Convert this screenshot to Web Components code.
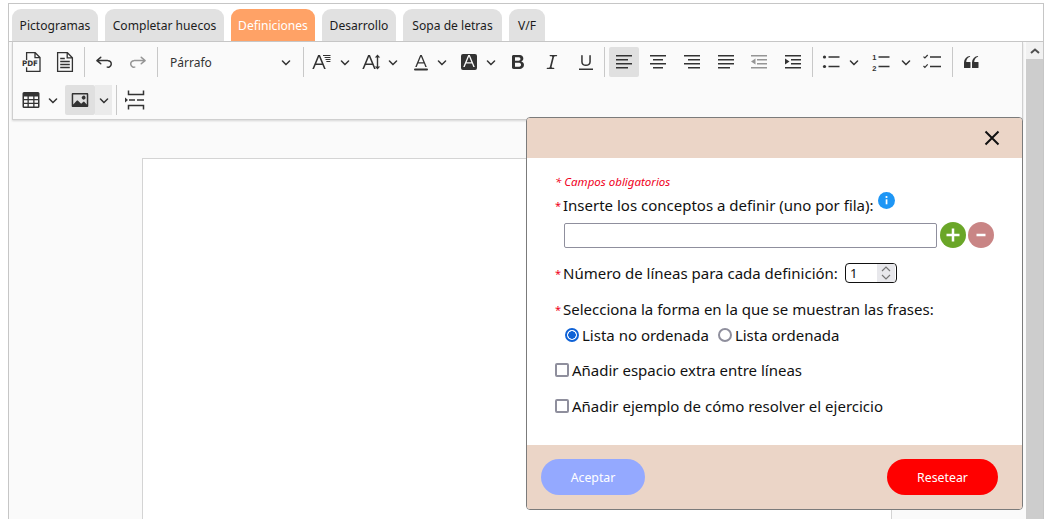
<!DOCTYPE html>
<html lang="es">
<head>
<meta charset="utf-8">
<title>Definiciones</title>
<style>
  html, body { margin: 0; height: 519px; overflow: hidden; background: #fff; }
  body { font-family: "Noto Sans", "Open Sans", sans-serif; }
</style>
</head>
<body>
<editor-shell>
  <tab-bar slot="tabs">
    <tab-item w="86">Pictogramas</tab-item>
    <tab-item w="119">Completar huecos</tab-item>
    <tab-item w="84" active>Definiciones</tab-item>
    <tab-item w="74">Desarrollo</tab-item>
    <tab-item w="99">Sopa de letras</tab-item>
    <tab-item w="36">V/F</tab-item>
  </tab-bar>

  <editor-toolbar slot="toolbar">
    <tool-button icon="pdf" ml="0"></tool-button>
    <tool-button icon="doc"></tool-button>
    <tool-sep></tool-sep>
    <tool-button icon="undo"></tool-button>
    <tool-button icon="redo" disabled></tool-button>
    <tool-sep></tool-sep>
    <tool-dropdown>Párrafo</tool-dropdown>
    <tool-sep ml="5"></tool-sep>
    <tool-button icon="fontsize" arrow="16" ml="3"></tool-button>
    <tool-button icon="lineheight" arrow="12"></tool-button>
    <tool-button icon="fontcolor" arrow="12" ml="7"></tool-button>
    <tool-button icon="bgcolor" arrow="14" ml="6"></tool-button>
    <tool-button icon="bold" ml="5"></tool-button>
    <tool-button icon="italic"></tool-button>
    <tool-button icon="underline"></tool-button>
    <tool-sep ml="3"></tool-sep>
    <tool-button icon="alignleft" active></tool-button>
    <tool-button icon="aligncenter"></tool-button>
    <tool-button icon="alignright"></tool-button>
    <tool-button icon="alignjustify"></tool-button>
    <tool-button icon="outdent" disabled ml="3"></tool-button>
    <tool-button icon="indent"></tool-button>
    <tool-sep></tool-sep>
    <tool-button icon="bullets" arrow="16" ml="3"></tool-button>
    <tool-button icon="numbers" arrow="20"></tool-button>
    <tool-button icon="todo" ml="1"></tool-button>
    <tool-sep ml="5"></tool-sep>
    <tool-button icon="quote" ml="3"></tool-button>
    <tool-break></tool-break>
    <tool-button icon="table" arrow="14" ml="0"></tool-button>
    <tool-button icon="image" arrow="17" active ml="5"></tool-button>
    <tool-sep></tool-sep>
    <tool-button icon="pagebreak" ml="3"></tool-button>
  </editor-toolbar>

  <form-dialog slot="dialog">
    <form-row h="18" top="14"><span style="font-size:11.5px;font-style:italic;color:#f0001c">* Campos obligatorios</span></form-row>
    <form-row h="20" top="5"><req-label>Inserte los conceptos a definir (uno por fila):</req-label><info-dot></info-dot></form-row>
    <form-row h="26" top="7" left="9"><text-box></text-box><round-button kind="plus"></round-button><round-button kind="minus"></round-button></form-row>
    <form-row h="20" top="15"><req-label>Número de líneas para cada definición:</req-label><number-box>1</number-box></form-row>
    <form-row h="20" top="16"><req-label>Selecciona la forma en la que se muestran las frases:</req-label></form-row>
    <form-row h="20" top="6" left="10"><radio-option checked>Lista no ordenada</radio-option><radio-option>Lista ordenada</radio-option></form-row>
    <form-row h="20" top="15"><check-option>Añadir espacio extra entre líneas</check-option></form-row>
    <form-row h="20" top="16"><check-option>Añadir ejemplo de cómo resolver el ejercicio</check-option></form-row>
    <pill-button slot="footer" color="#94a9ff" w="104">Aceptar</pill-button>
    <pill-button slot="footer" color="#ff0000" w="111">Resetear</pill-button>
  </form-dialog>
</editor-shell>

<script>
// paths for the toolbar icons, all on a 20x20 box
const ICONS = {
  pdf: `<path fill="none" stroke="#333" stroke-width="1.3" d="M5.6 8V.7h8.600l4.800 4.800V19.300H5.600v-4M14 .9v4.800h4.800"/>
        <rect x="0" y="8.200" width="17.500" height="6.800" fill="#fafafa"/>
        <text x="9" y="14.300" font-size="7.500" font-weight="700" text-anchor="middle" fill="#333" font-family="DejaVu Sans, sans-serif" textLength="16" lengthAdjust="spacingAndGlyphs">PDF</text>`,
  doc: `<path fill="none" stroke="#333" stroke-width="1.3" d="M2.6 19.300V.7h9.800l5 5v13.600zM12.200 .9v5h5"/>
        <path stroke="#333" stroke-width="1.3" d="M5.200 6.500h4.600M5.200 9.500h9.600M5.200 12.500h9.600M5.200 15.500h9.600"/>`,
  undo: `<path d="m5.042 9.367 2.189 1.837a.75.75 0 0 1-.965 1.149l-3.788-3.18a.747.747 0 0 1-.21-.284.75.75 0 0 1 .17-.945L6.23 4.762a.75.75 0 1 1 .964 1.15L4.863 7.866h8.917A.75.75 0 0 1 14 7.9a4 4 0 1 1-1.477 7.718l.344-1.489a2.5 2.5 0 1 0 1.094-4.73l.008-.032H5.042z"/>`,
  redo: `<path d="m14.958 9.367-2.189 1.837a.75.75 0 0 0 .965 1.149l3.788-3.18a.747.747 0 0 0 .21-.284.75.75 0 0 0-.17-.945L13.77 4.762a.75.75 0 1 0-.964 1.15l2.331 1.955H6.22A.75.75 0 0 0 6 7.9a4 4 0 1 0 1.477 7.718l-.344-1.489A2.5 2.5 0 1 1 6.039 9.4l-.008-.032h8.927z"/>`,
  fontsize: `<path d="M9.816 11.5 7.038 4.785 4.261 11.5h5.555Zm.62 1.5H3.641l-1.666 4.028H.312l5.789-14h1.875l5.789 14h-1.663L10.436 13Z"/>
        <path stroke="#333" stroke-width="1" d="M11 3.500h7.500M12.600 5.500h5.900M13.500 7.500h5M14.400 9.500h4"/>`,
  lineheight: `<path d="M9.816 11.5 7.038 4.785 4.261 11.5h5.555Zm.62 1.5H3.641l-1.666 4.028H.312l5.789-14h1.875l5.789 14h-1.663L10.436 13Z"/>
        <path d="M16.200 5.600v8.800h2l-2.700 3.200-2.700-3.200h2V5.600h-2l2.700-3.200 2.700 3.200z"/>`,
  fontcolor: `<path d="M12.4 10.3 10 4.5l-2.4 5.8h4.8zm.5 1.2H7.1L5.7 15H4.2l5-12h1.6l5 12h-1.5L13 11.5zm3.1 7H4a1 1 0 0 1 0-2h12a1 1 0 0 1 0 2z"/>`,
  bgcolor: `<path fill-rule="evenodd" d="M4 2h12a2 2 0 0 1 2 2v12a2 2 0 0 1-2 2H4a2 2 0 0 1-2-2V4a2 2 0 0 1 2-2zm8.4 8.3L10 4.5l-2.4 5.8h4.8zm.5 1.2H7.1L5.7 15H4.2l5-12h1.6l5 12h-1.5L13 11.5z"/>`,
  bold: `<path d="M10.187 17H5.773c-.637 0-1.092-.138-1.364-.415-.273-.277-.409-.718-.409-1.323V4.738c0-.617.14-1.062.419-1.332.279-.27.73-.406 1.354-.406h4.68c.69 0 1.288.041 1.793.124.506.083.96.242 1.36.478.341.197.644.447.906.75a3.262 3.262 0 0 1 .808 2.162c0 1.401-.722 2.426-2.167 3.075C15.05 10.175 16 11.315 16 13.01a3.756 3.756 0 0 1-2.296 3.504 6.1 6.1 0 0 1-1.517.377c-.571.073-1.238.11-2 .11zm-.217-6.217H7v4.087h3.069c1.977 0 2.965-.69 2.965-2.072 0-.707-.256-1.22-.768-1.537-.512-.319-1.277-.478-2.296-.478zM7 5.13v3.619h2.606c.729 0 1.292-.067 1.69-.2a1.6 1.6 0 0 0 .91-.765c.165-.267.247-.566.247-.897 0-.707-.26-1.176-.778-1.409-.519-.232-1.31-.348-2.375-.348H7z"/>`,
  italic: `<path d="m9.586 14.633.021.004c-.036.335.095.655.393.962.082.083.173.15.274.201h1.474a.6.6 0 1 1 0 1.2H5.304a.6.6 0 0 1 0-1.2h1.15c.474-.07.809-.182 1.005-.334.157-.122.291-.32.404-.597l2.416-9.55a1.053 1.053 0 0 0-.281-.823 1.12 1.12 0 0 0-.442-.296H8.15a.6.6 0 0 1 0-1.2h6.443a.6.6 0 1 1 0 1.2h-1.195c-.376.056-.65.155-.823.296-.215.175-.423.439-.623.79l-2.366 9.347z"/>`,
  underline: `<path d="M3 18v-1.5h14V18zm2.2-8V3.6c0-.4.4-.6.8-.6.3 0 .7.2.7.6v6.2c0 2 1.3 2.8 3.2 2.8 1.9 0 3.4-.9 3.4-2.9V3.6c0-.3.4-.5.8-.5.3 0 .7.2.7.5V10c0 2.7-2.2 4-4.9 4-2.6 0-4.7-1.2-4.7-4z"/>`,
  alignleft: lines([[2, 18], [2, 14], [2, 18], [2, 14]]),
  aligncenter: lines([[2, 18], [5, 15], [2, 18], [5, 15]]),
  alignright: lines([[2, 18], [6, 18], [2, 18], [6, 18]]),
  alignjustify: lines([[2, 18], [2, 18], [2, 18], [2, 14]]),
  outdent: `<path stroke="#333" stroke-width="1.5" d="M2 3.750h16M8 7.750h10M8 11.750h10M2 15.750h16"/><path d="M6.500 6.500v6L2 9.500z"/>`,
  indent: `<path stroke="#333" stroke-width="1.5" d="M2 3.750h16M8 7.750h10M8 11.750h10M2 15.750h16"/><path d="M2 6.500v6l4.500-3z"/>`,
  bullets: `<circle cx="3.500" cy="5" r="1.600"/><circle cx="3.500" cy="14.500" r="1.600"/><path stroke="#333" stroke-width="1.5" d="M7.500 5h11M7.500 14.500h11"/>`,
  numbers: `<path stroke="#333" stroke-width="1.5" d="M7.500 5h11M7.500 14.500h11"/>
        <text x="3.400" y="8" font-size="7.500" font-weight="700" text-anchor="middle" fill="#333" font-family="Liberation Sans, sans-serif">1</text>
        <text x="3.400" y="18.500" font-size="7.500" font-weight="700" text-anchor="middle" fill="#333" font-family="Liberation Sans, sans-serif">2</text>`,
  todo: `<path fill="none" stroke="#333" stroke-width="1.2" d="M1.500 4.600l1.400 1.400 2.800-3M1.500 14l1.400 1.400 2.800-3"/><path stroke="#333" stroke-width="1.5" d="M8 5h11M8 14.500h11"/>`,
  quote: `<path d="M3 10.423a6.5 6.5 0 0 1 6.056-6.408l.038.67C6.448 5.423 5.354 7.663 5.22 10H9c.552 0 .5.432.5.986v4.511c0 .554-.448.503-1 .503h-5c-.552 0-.5-.449-.5-1.003v-4.574zm8 0a6.5 6.5 0 0 1 6.056-6.408l.038.67c-2.646.739-3.74 2.979-3.873 5.315H17c.552 0 .5.432.5.986v4.511c0 .554-.448.503-1 .503h-5c-.552 0-.5-.449-.5-1.003v-4.574z"/>`,
  table: `<path fill-rule="evenodd" d="M3 2h14a1.5 1.5 0 0 1 1.5 1.500v13A1.5 1.5 0 0 1 17 18H3a1.500 1.500 0 0 1-1.500-1.500v-13A1.500 1.500 0 0 1 3 2zm0 4.500V9h3.500V6.500zm4.800 0V9h4.400V6.500zm5.700 0V9H17V6.500zM3 10.300v2.400h3.500v-2.400zm4.800 0v2.400h4.400v-2.400zm5.700 0v2.400H17v-2.400zM3 14v2.500h3.500V14zm4.800 0v2.500h4.400V14zm5.700 0v2.500H17V14z"/>`,
  image: `<path d="M6.91 10.54c.26-.23.64-.21.88.03l3.36 3.14 2.23-2.06a.64.64 0 0 1 .87 0l2.52 2.97V4.5H3.2v10.12l3.71-4.08zm10.27-7.51c.6 0 1.09.47 1.09 1.05v11.84c0 .59-.49 1.06-1.09 1.06H2.79c-.6 0-1.09-.47-1.09-1.06V4.08c0-.58.49-1.05 1.1-1.05h14.38zm-5.22 5.56a1.96 1.96 0 1 1 3.4-1.96 1.96 1.96 0 0 1-3.4 1.96z"/>`,
  pagebreak: `<path fill="none" stroke="#333" stroke-width="1.5" d="M3.500 .5v4h15v-4M3.500 19.500v-4h15v4"/>
        <path stroke="#333" stroke-width="1.500" d="M4 10h6M12 10h7"/><path d="M0 7.500v5l3-2.500z"/>`
};

function lines(rows) {
  const ys = [3.75, 7.75, 11.75, 15.75];
  return rows.map((r, i) => `<path stroke="#333" stroke-width="1.5" d="M${r[0]} ${ys[i]}H${r[1]}"/>`).join("");
}

const CHEVRON = `<svg viewBox="0 0 10 10" width="10" height="10" fill="#333"><path d="M.941 4.523a.75.75 0 1 1 1.06-1.06l3.006 3.005 3.005-3.005a.75.75 0 1 1 1.06 1.06l-3.549 3.55a.75.75 0 0 1-1.168-.136L.941 4.523z"/></svg>`;

// small helper so each element below stays short
class Base extends HTMLElement {
  render(html) {
    const shadow = this.attachShadow({mode: "open"});
    shadow.innerHTML = html;
  }
}

class EditorShell extends Base {
  constructor() {
    super();
    this.render(`<style>
      :host { display: block; position: relative; box-sizing: border-box; width: 1036px; height: 516px; margin: 3px 0 0 8px;
        border: 1px solid #c6c6c6; border-bottom: 0; padding-top: 5px; }
      .editor { display: flex; height: 478px; box-sizing: border-box; border-top: 1px solid #c6c6c6; background: #fafafa; overflow: hidden; }
      .main { flex: 1; min-width: 0; }
      .page { margin: 38px 0 0 133px; width: 750px; height: 500px; box-sizing: border-box; background: #fff; border: 1px solid #d4d4d4; }
      .bar { width: 17px; background: #f1f1f1; display: flex; flex-direction: column; align-items: center; }
      .up { height: 17px; display: flex; align-items: center; justify-content: center; }
      .thumb { flex: 1; width: 100%; background: #cdcdcd; }
    </style>
    <slot name="tabs"></slot>
    <div class="editor">
      <div class="main"><slot name="toolbar"></slot><div class="page"></div></div>
      <div class="bar">
        <div class="up"><svg width="10" height="6" viewBox="0 0 10 6"><path fill="none" stroke="#505050" stroke-width="2" d="M1 5l4-3.500L9 5"/></svg></div>
        <div class="thumb"></div>
      </div>
    </div>
    <slot name="dialog"></slot>`);
  }
}

class TabBar extends Base {
  constructor() {
    super();
    this.render(`<style>
      :host { display: flex; gap: 7px; padding-left: 3px; height: 32px; }
    </style><slot></slot>`);
  }
}

class TabItem extends Base {
  constructor() {
    super();
    this.render(`<style>
      :host { display: flex; align-items: center; justify-content: center; width: ${this.getAttribute("w")}px; height: 32px; border-radius: 9px 9px 0 0; background: #e1e1e1;
        color: #1c1c1c; font: 12.1px "Noto Sans", sans-serif; }
      :host([active]) { background: #ffa266; color: #fff; }
    </style><slot></slot>`);
  }
}

class EditorToolbar extends Base {
  constructor() {
    super();
    this.render(`<style>
      :host { display: flex; flex-wrap: wrap; align-content: flex-start; row-gap: 4px; box-sizing: border-box; height: 78px; margin: 0 3px; padding: 5px 3px 0;
        background: #fafafa; border: 1px solid #cfcfcf; border-top: 0; box-shadow: 0 1px 2px rgba(0,0,0,.15); }
    </style><slot></slot>`);
  }
}

class ToolButton extends Base {
  constructor() {
    super();
    const arrow = this.getAttribute("arrow");
    this.render(`<style>
      :host { display: flex; height: 30px; margin-left: ${this.getAttribute("ml") || 4}px; flex: none; }
      .ic { width: 30px; display: flex; align-items: center; justify-content: center; border-radius: 2px; }
      .ar { width: ${arrow || 0}px; display: flex; align-items: center; justify-content: center; }
      svg { display: block; overflow: visible; }
      :host([active]) .ic { background: #e0e0e0; }
      :host([active]) .ar { background: #ebebeb; }
      :host([disabled]) { opacity: .5; }
    </style>
    <div class="ic"><svg viewBox="0 0 20 20" width="20" height="20" fill="#333">${ICONS[this.getAttribute("icon")]}</svg></div>
    ${arrow ? `<div class="ar">${CHEVRON}</div>` : ""}`);
  }
}

class ToolDropdown extends Base {
  constructor() {
    super();
    this.render(`<style>
      :host { display: flex; align-items: center; justify-content: space-between; box-sizing: border-box; width: 136px; height: 30px; margin-left: 4px; padding: 0 7px 0 8px;
        font: 12px "Noto Sans", sans-serif; color: #333; flex: none; }
    </style><slot></slot>${CHEVRON}`);
  }
}

class ToolSep extends Base {
  constructor() {
    super();
    this.render(`<style>
      :host { display: block; width: 1px; height: 30px; background: #c8c8c8; margin-left: ${this.getAttribute("ml") || 4}px; flex: none; }
    </style>`);
  }
}

class ToolBreak extends Base {
  constructor() {
    super();
    this.render(`<style>:host { display: block; flex-basis: 100%; height: 0; }</style>`);
  }
}

class FormDialog extends Base {
  constructor() {
    super();
    this.render(`<style>
      :host { display: flex; flex-direction: column; position: absolute; left: 517px; top: 113px; width: 497px; height: 393px; box-sizing: border-box;
        border: 1px solid #7b7b7b; border-radius: 4px; background: #fff; overflow: hidden; font: 15px "Noto Sans", sans-serif; color: #111; }
      header { height: 40px; background: #ebd5c7; display: flex; align-items: center; justify-content: flex-end; padding-right: 22px; flex: none; }
      main { flex: 1; padding-left: 28px; }
      footer { height: 64px; background: #ebd5c7; display: flex; align-items: center; justify-content: space-between; padding: 0 24px 0 14px; flex: none; }
    </style>
    <header><svg width="16" height="16" viewBox="0 0 16 16"><path stroke="#111" stroke-width="2" d="M1.500 1.500l13 13M14.500 1.500l-13 13"/></svg></header>
    <main><slot></slot></main>
    <footer><slot name="footer"></slot></footer>`);
  }
}

class FormRow extends Base {
  constructor() {
    super();
    this.render(`<style>
      :host { display: flex; align-items: center; height: ${this.getAttribute("h")}px; margin-top: ${this.getAttribute("top")}px;
        padding-left: ${this.getAttribute("left") || 0}px; }
    </style><slot></slot>`);
  }
}

class ReqLabel extends Base {
  constructor() {
    super();
    this.render(`<style>
      :host { display: inline-flex; align-items: center; white-space: nowrap; }
      i { color: #f0001c; font-style: normal; font-size: 11px; width: 8px; }
    </style><i>*</i><slot></slot>`);
  }
}

class InfoDot extends Base {
  constructor() {
    super();
    this.render(`<style>
      :host { display: block; width: 17px; height: 17px; margin: -9px 0 0 4px; }
      svg { display: block; }
    </style>
    <svg viewBox="0 0 17 17" width="17" height="17"><circle cx="8.500" cy="8.500" r="8.500" fill="#1e96f5"/><rect x="7.700" y="7.300" width="1.700" height="5" fill="#fff"/><circle cx="8.500" cy="5" r="1.100" fill="#fff"/></svg>`);
  }
}

class TextBox extends Base {
  constructor() {
    super();
    this.render(`<style>
      :host { display: block; box-sizing: border-box; width: 373px; height: 25px; border: 1px solid #8f8f9d; border-radius: 2px; background: #fff; }
    </style>`);
  }
}

class RoundButton extends Base {
  constructor() {
    super();
    const plus = this.getAttribute("kind") === "plus";
    this.render(`<style>
      :host { display: block; width: 26px; height: 26px; margin-left: ${plus ? 3 : 2}px; }
      svg { display: block; }
    </style>
    <svg viewBox="0 0 26 26" width="26" height="26"><circle cx="13" cy="13" r="13" fill="${plus ? "#6aa628" : "#c98585"}"/>
      <path stroke="#fff" stroke-width="2.500" d="${plus ? "M6.500 13h13M13 6.500v13" : "M8.500 13h9"}"/></svg>`);
  }
}

class NumberBox extends Base {
  constructor() {
    super();
    this.render(`<style>
      :host { display: flex; align-items: center; justify-content: space-between; box-sizing: border-box; width: 52px; height: 20px; margin-left: 7px;
        border: 1px solid #111; border-radius: 4px; padding-left: 4px; font-size: 13px; overflow: hidden; }
      .spin { width: 18px; height: 18px; margin-right: 1px; background: #e8e8ec; display: flex; align-items: center; justify-content: center; }
    </style><slot></slot>
    <div class="spin"><svg width="10" height="14" viewBox="0 0 10 14"><path fill="none" stroke="#777" stroke-width="1.200" d="M1 5l4-4 4 4M1 9l4 4 4-4"/></svg></div>`);
  }
}

class RadioOption extends Base {
  constructor() {
    super();
    this.render(`<style>
      :host { display: inline-flex; align-items: center; margin-right: 9px; white-space: nowrap; }
      .dot { box-sizing: border-box; width: 14px; height: 14px; border-radius: 50%; border: 2px solid #8f8f9d; margin-right: 3px; background: #fff; }
      :host([checked]) .dot { border-color: #0f62d6; background: radial-gradient(circle, #0f62d6 0 3.500px, #fff 4px); }
    </style><span class="dot"></span><slot></slot>`);
  }
}

class CheckOption extends Base {
  constructor() {
    super();
    this.render(`<style>
      :host { display: inline-flex; align-items: center; white-space: nowrap; }
      .box { box-sizing: border-box; width: 14px; height: 14px; border-radius: 2px; border: 2px solid #8f8f9d; margin-right: 3px; background: #fff; }
    </style><span class="box"></span><slot></slot>`);
  }
}

class PillButton extends Base {
  constructor() {
    super();
    this.render(`<style>
      :host { display: flex; align-items: center; justify-content: center; width: ${this.getAttribute("w")}px; height: 36px; border-radius: 18px;
        background: ${this.getAttribute("color")}; color: #fff; font-size: 12.3px; }
    </style><slot></slot>`);
  }
}

customElements.define("editor-shell", EditorShell);
customElements.define("tab-bar", TabBar);
customElements.define("tab-item", TabItem);
customElements.define("editor-toolbar", EditorToolbar);
customElements.define("tool-button", ToolButton);
customElements.define("tool-dropdown", ToolDropdown);
customElements.define("tool-sep", ToolSep);
customElements.define("tool-break", ToolBreak);
customElements.define("form-dialog", FormDialog);
customElements.define("form-row", FormRow);
customElements.define("req-label", ReqLabel);
customElements.define("info-dot", InfoDot);
customElements.define("text-box", TextBox);
customElements.define("round-button", RoundButton);
customElements.define("number-box", NumberBox);
customElements.define("radio-option", RadioOption);
customElements.define("check-option", CheckOption);
customElements.define("pill-button", PillButton);
</script>
</body>
</html>
